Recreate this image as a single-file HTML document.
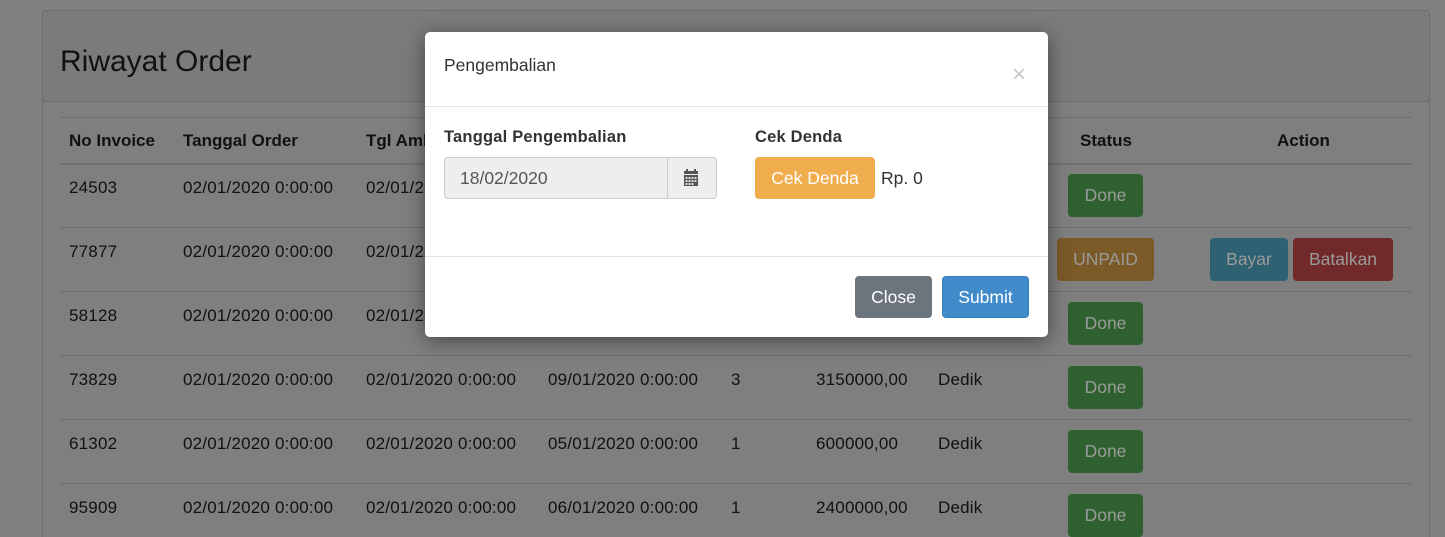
<!DOCTYPE html>
<html><head><meta charset="utf-8"><style>
*{box-sizing:border-box;margin:0;padding:0}
html,body{width:1445px;height:537px;overflow:hidden}
body{background:#808080;font-family:"Liberation Sans",sans-serif;font-size:17px;color:#111;position:relative}
.a{position:absolute;white-space:nowrap}
.card{position:absolute;left:42px;top:10px;width:1388px;height:540px;border:1px solid #6c6c6c;border-radius:4px;background:#7f7f7f}
.ch{position:absolute;left:0;top:0;width:100%;height:91px;background:#7b7b7b;border-bottom:1px solid #6c6c6c}
.line{position:absolute;left:60px;width:1352px;height:1px;background:#6f6f6f}
.btn{position:absolute;border-radius:4px;color:#fff;text-align:center;font-size:17.5px}
.sh{position:absolute;left:425px;top:32px;width:623px;height:305px;border-radius:5px;box-shadow:0 4px 20px rgba(0,0,0,0.45)}
.modal{position:absolute;left:425px;top:32px;width:623px;height:305px;background:#fff;border-radius:5px}
.t{letter-spacing:0.2px}
.d{color:#9a9a9a}
</style></head><body>
<div class="card"><div class="ch"></div></div>
<div class="a" style="left:60px;top:45px;font-size:30px;color:#111">Riwayat Order</div>
<div class="line" style="top:117px"></div>
<div class="line" style="top:163px;height:2px"></div>
<div class="line" style="top:227px"></div>
<div class="line" style="top:291px"></div>
<div class="line" style="top:355px"></div>
<div class="line" style="top:419px"></div>
<div class="line" style="top:483px"></div>
<div style="font-weight:bold;font-size:17px">
<div class="a" style="left:69px;top:131px">No Invoice</div>
<div class="a" style="left:183px;top:131px">Tanggal Order</div>
<div class="a" style="left:366px;top:131px">Tgl Ambil</div>
<div class="a" style="left:1080px;top:131px">Status</div>
<div class="a" style="left:1277px;top:131px">Action</div>
</div>
<div class="t">
<div class="a" style="left:69px;top:178px">24503</div><div class="a" style="left:183px;top:178px">02/01/2020 0:00:00</div><div class="a" style="left:366px;top:178px">02/01/2020 0:00:00</div>
<div class="a" style="left:69px;top:242px">77877</div><div class="a" style="left:183px;top:242px">02/01/2020 0:00:00</div><div class="a" style="left:366px;top:242px">02/01/2020 0:00:00</div>
<div class="a" style="left:69px;top:306px">58128</div><div class="a" style="left:183px;top:306px">02/01/2020 0:00:00</div><div class="a" style="left:366px;top:306px">02/01/2020 0:00:00</div>
<div class="a" style="left:69px;top:370px">73829</div><div class="a" style="left:183px;top:370px">02/01/2020 0:00:00</div><div class="a" style="left:366px;top:370px">02/01/2020 0:00:00</div><div class="a" style="left:548px;top:370px">09/01/2020 0:00:00</div><div class="a" style="left:731px;top:370px">3</div><div class="a" style="left:816px;top:370px">3150000,00</div><div class="a" style="left:938px;top:370px">Dedik</div>
<div class="a" style="left:69px;top:434px">61302</div><div class="a" style="left:183px;top:434px">02/01/2020 0:00:00</div><div class="a" style="left:366px;top:434px">02/01/2020 0:00:00</div><div class="a" style="left:548px;top:434px">05/01/2020 0:00:00</div><div class="a" style="left:731px;top:434px">1</div><div class="a" style="left:816px;top:434px">600000,00</div><div class="a" style="left:938px;top:434px">Dedik</div>
<div class="a" style="left:69px;top:498px">95909</div><div class="a" style="left:183px;top:498px">02/01/2020 0:00:00</div><div class="a" style="left:366px;top:498px">02/01/2020 0:00:00</div><div class="a" style="left:548px;top:498px">06/01/2020 0:00:00</div><div class="a" style="left:731px;top:498px">1</div><div class="a" style="left:816px;top:498px">2400000,00</div><div class="a" style="left:938px;top:498px">Dedik</div>
</div>
<div class="btn d" style="left:1068px;top:174px;width:75px;height:43px;line-height:43px;background:#2f602f">Done</div>
<div class="btn d" style="left:1057px;top:238px;width:97px;height:43px;line-height:43px;background:#7b5a28">UNPAID</div>
<div class="btn d" style="left:1210px;top:238px;width:78px;height:43px;line-height:43px;background:#2e6272">Bayar</div>
<div class="btn d" style="left:1293px;top:238px;width:100px;height:43px;line-height:43px;background:#712929">Batalkan</div>
<div class="btn d" style="left:1068px;top:302px;width:75px;height:43px;line-height:43px;background:#2f602f">Done</div>
<div class="btn d" style="left:1068px;top:366px;width:75px;height:43px;line-height:43px;background:#2f602f">Done</div>
<div class="btn d" style="left:1068px;top:430px;width:75px;height:43px;line-height:43px;background:#2f602f">Done</div>
<div class="btn d" style="left:1068px;top:494px;width:75px;height:43px;line-height:43px;background:#2f602f">Done</div>
<div class="sh"></div>
<div class="modal">
<div class="a" style="left:19px;top:23px;font-size:17.5px;color:#333">Pengembalian</div>
<div class="a" style="left:587px;top:31px;font-size:24px;color:#c8c8c8;line-height:24px">×</div>
<div class="a" style="left:0;top:74px;width:623px;height:1px;background:#e5e5e5"></div>
<div class="a" style="left:19px;top:96px;font-size:16.5px;font-weight:bold;color:#333;letter-spacing:0.2px">Tanggal Pengembalian</div>
<div class="a" style="left:19px;top:125px;width:273px;height:42px;border:1px solid #ccc;border-radius:4px;background:#eee"></div>
<div class="a" style="left:242px;top:126px;width:1px;height:40px;background:#ccc"></div>
<div class="a" style="left:35px;top:136px;color:#555;font-size:17.5px">18/02/2020</div>
<svg class="a" style="left:258px;top:137px" width="16" height="18" viewBox="0 0 16 18"><rect x="3" y="0" width="2" height="3" fill="#555"/><rect x="11" y="0" width="2" height="3" fill="#555"/><rect x="1" y="2" width="14" height="3" fill="#555"/><rect x="1" y="6" width="14" height="11" fill="#555"/><g fill="#ddd"><rect x="2.5" y="8" width="2" height="2"/><rect x="5.5" y="8" width="2" height="2"/><rect x="8.5" y="8" width="2" height="2"/><rect x="11.5" y="8" width="2" height="2"/><rect x="2.5" y="11" width="2" height="2"/><rect x="5.5" y="11" width="2" height="2"/><rect x="8.5" y="11" width="2" height="2"/><rect x="11.5" y="11" width="2" height="2"/><rect x="2.5" y="14" width="2" height="2"/><rect x="5.5" y="14" width="2" height="2"/><rect x="8.5" y="14" width="2" height="2"/></g></svg>
<div class="a" style="left:330px;top:96px;font-size:16.5px;font-weight:bold;color:#333;letter-spacing:0.2px">Cek Denda</div>
<div class="btn" style="left:330px;top:125px;width:120px;height:42px;line-height:42px;background:#f0ad4e">Cek Denda</div>
<div class="a" style="left:456px;top:136px;color:#333;font-size:17.5px">Rp. 0</div>
<div class="a" style="left:0;top:224px;width:623px;height:1px;background:#e5e5e5"></div>
<div class="btn" style="left:430px;top:244px;width:77px;height:42px;line-height:42px;background:#6c757d">Close</div>
<div class="btn" style="left:517px;top:244px;width:87px;height:42px;line-height:40px;background:#428bca;border:1px solid #357ebd">Submit</div>
</div>
</body></html>
